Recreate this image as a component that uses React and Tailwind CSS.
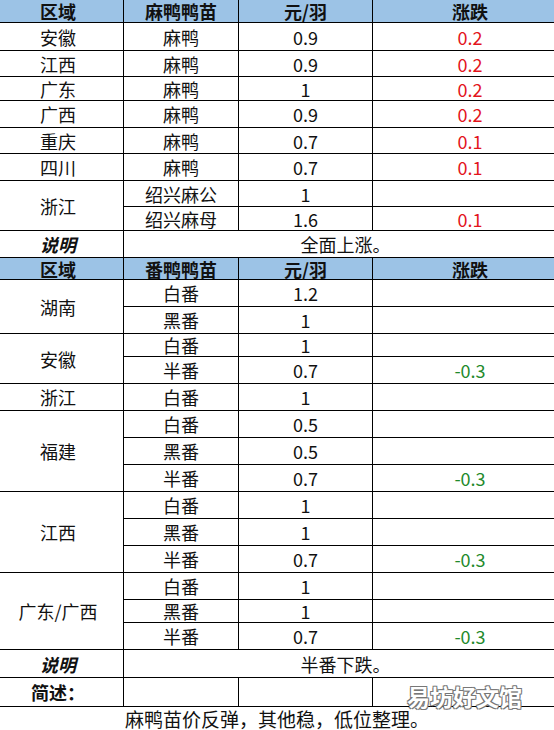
import React from "react";

// 麻鸭鸭苗 rows
const duckRows = [
  { h: "h-[28px]", region: "安徽", kind: "麻鸭", price: "0.9", change: "0.2" },
  { h: "h-[26px]", region: "江西", kind: "麻鸭", price: "0.9", change: "0.2" },
  { h: "h-[24px]", region: "广东", kind: "麻鸭", price: "1", change: "0.2" },
  { h: "h-[27px]", region: "广西", kind: "麻鸭", price: "0.9", change: "0.2" },
  { h: "h-[26px]", region: "重庆", kind: "麻鸭", price: "0.7", change: "0.1" },
  { h: "h-[27px]", region: "四川", kind: "麻鸭", price: "0.7", change: "0.1" },
  { h: "h-[26px]", region: "浙江", span: 2, kind: "绍兴麻公", price: "1", change: "" },
  { h: "h-[24px]", kind: "绍兴麻母", price: "1.6", change: "0.1" },
];

// 番鸭鸭苗 rows
const muscovyRows = [
  { h: "h-[27px]", region: "湖南", span: 2, kind: "白番", price: "1.2", change: "" },
  { h: "h-[27px]", kind: "黑番", price: "1", change: "" },
  { h: "h-[23px]", region: "安徽", span: 2, kind: "白番", price: "1", change: "" },
  { h: "h-[27px]", kind: "半番", price: "0.7", change: "-0.3" },
  { h: "h-[27px]", region: "浙江", kind: "白番", price: "1", change: "" },
  { h: "h-[27px]", region: "福建", span: 3, kind: "白番", price: "0.5", change: "" },
  { h: "h-[27px]", kind: "黑番", price: "0.5", change: "" },
  { h: "h-[27px]", kind: "半番", price: "0.7", change: "-0.3" },
  { h: "h-[27px]", region: "江西", span: 3, kind: "白番", price: "1", change: "" },
  { h: "h-[27px]", kind: "黑番", price: "1", change: "" },
  { h: "h-[27px]", kind: "半番", price: "0.7", change: "-0.3" },
  { h: "h-[27px]", region: "广东/广西", span: 3, kind: "白番", price: "1", change: "" },
  { h: "h-[23px]", kind: "黑番", price: "1", change: "" },
  { h: "h-[27px]", kind: "半番", price: "0.7", change: "-0.3" },
];

const Td = ({ children, className = "", rowSpan, colSpan }) => (
  <td
    rowSpan={rowSpan}
    colSpan={colSpan}
    className={`border-b border-r border-black p-0 text-center align-middle ${className}`}
  >
    {children}
  </td>
);

const HeaderRow = ({ h, kindLabel }) => (
  <tr className={`${h} bg-[#9cc3e6] font-bold leading-[18px]`}>
    <Td>区域</Td>
    <Td>{kindLabel}</Td>
    <Td>元/羽</Td>
    <Td>涨跌</Td>
  </tr>
);

const DataRows = ({ rows }) =>
  rows.map((row, i) => {
    const up = !row.change.startsWith("-");
    return (
      <tr key={i} className={row.h}>
        {row.region && <Td rowSpan={row.span}>{row.region}</Td>}
        <Td>{row.kind}</Td>
        <Td>{row.price}</Td>
        <Td className={up ? "text-[#e3141c]" : "text-[#1f8a2c]"}>{row.change}</Td>
      </tr>
    );
  });

const NoteRow = ({ h, text }) => (
  <tr className={h}>
    <Td className="font-bold italic">说明</Td>
    <Td colSpan={3}>{text}</Td>
  </tr>
);

export default function App() {
  return (
    <div className="relative w-[554px] h-[730px] overflow-hidden bg-white text-[18px] leading-[20px] text-[#111] font-['Noto_Sans_CJK_SC',sans-serif]">
      <table className="ml-[-7px] w-[575px] table-fixed border-separate border-spacing-0">
        <colgroup>
          <col className="w-[131px]" />
          <col className="w-[115px]" />
          <col className="w-[134px]" />
          <col className="w-[195px]" />
        </colgroup>
        <tbody>
          <HeaderRow h="h-[23px]" kindLabel="麻鸭鸭苗" />
          <DataRows rows={duckRows} />
          <NoteRow h="h-[27px]" text="全面上涨。" />
          <HeaderRow h="h-[22px]" kindLabel="番鸭鸭苗" />
          <DataRows rows={muscovyRows} />
          <NoteRow h="h-[28px]" text="半番下跌。" />
          <tr className="h-[29px]">
            <Td className="font-bold">简述：</Td>
            <Td />
            <Td />
            <Td />
          </tr>
        </tbody>
      </table>
      <div className="h-[23px] text-center text-[19px] leading-[23px]">麻鸭苗价反弹，其他稳，低位整理。</div>

      {/* watermark */}
      <div className="absolute left-[407px] top-[683px] text-[23px] leading-[26px] font-bold text-white [text-shadow:1px_1px_0_#777,-1px_-1px_0_#777,1px_-1px_0_#777,-1px_1px_0_#777]">
        易坊好文馆
      </div>
    </div>
  );
}
